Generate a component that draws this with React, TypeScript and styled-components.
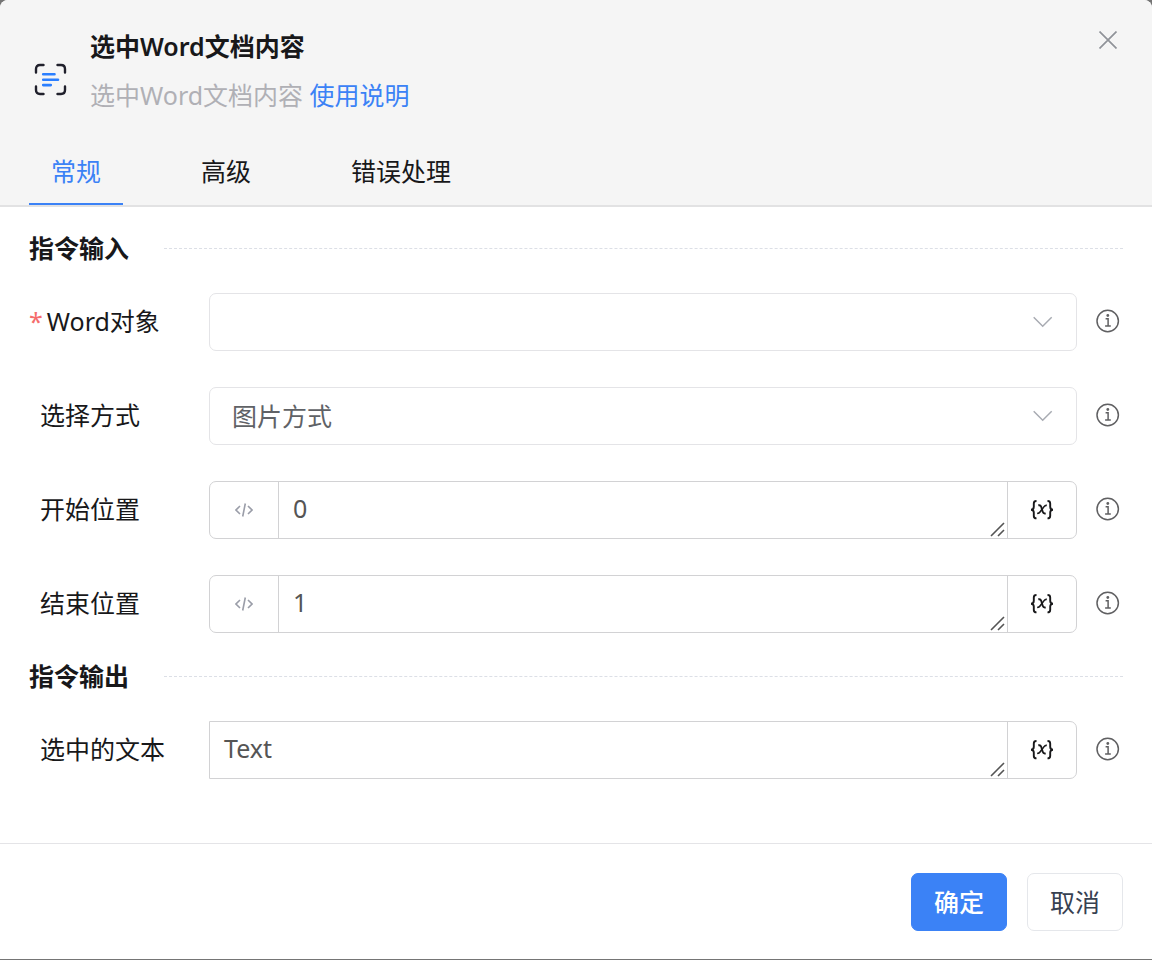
import React, { useState } from 'react';
import styled, { createGlobalStyle } from 'styled-components';

const GlobalStyle = createGlobalStyle`
  *, *::before, *::after { box-sizing: border-box; }
  body {
    margin: 0;
    background: #757575;
    font-family: 'Noto Sans', 'Noto Sans CJK SC', sans-serif;
    font-size: 25px;
    line-height: 36px;
    color: #18181a;
  }
  button, input, select, textarea { font: inherit; color: inherit; margin: 0; }
`;

const Dialog = styled.main`
  display: flex;
  flex-direction: column;
  min-height: calc(100vh - 1px);
  margin-bottom: 1px;
  background: #fff;
  border-radius: 8px 8px 0 0;
  overflow: hidden;
`;

const Header = styled.header`
  background: #f5f5f5;
  border-bottom: 2px solid #e2e2e3;
`;

const TitleBar = styled.div`
  display: flex;
  align-items: flex-start;
  padding: 28px 30px 0 34px;
`;

const TitleIcon = styled.svg`
  flex: none;
  margin: 35px 23px 0 0;
`;

const TitleText = styled.div`
  flex: 1;
  display: grid;
  gap: 13px;
`;

const Title = styled.h1`
  margin: 0;
  font-size: 25px;
  font-weight: 600;
`;

const Description = styled.p`
  margin: 0;
  color: #b0b0b5;
`;

const HelpLink = styled.a`
  color: #3b82f6;
  text-decoration: none;
`;

const IconButton = styled.button`
  display: grid;
  place-items: center;
  width: 28px;
  height: 24px;
  padding: 0;
  border: 0;
  background: none;
  cursor: pointer;
`;

const TabList = styled.div`
  display: flex;
  gap: 56px;
  padding: 25px 29px 0;
`;

const Tab = styled.button<{ $active: boolean }>`
  height: 67px;
  padding: 0 22px;
  border: 0;
  border-bottom: 2px solid ${(p) => (p.$active ? '#3b82f6' : 'transparent')};
  background: none;
  color: ${(p) => (p.$active ? '#3b82f6' : '#18181a')};
  cursor: pointer;
`;

const Content = styled.div`
  flex: 1;
  padding: 20px 29px 64px;
`;

const Section = styled.section`
  & + & { margin-top: 22px; }
`;

const SectionHead = styled.div`
  display: flex;
  align-items: center;
  gap: 35px;
  height: 42px;
  margin-bottom: 24px;

  &::after {
    content: '';
    flex: 1;
    border-top: 1px dashed #dcdfe6;
  }
`;

const SectionTitle = styled.h2`
  margin: 0;
  font-size: 25px;
  font-weight: 700;
`;

const Rows = styled.div`
  display: grid;
  gap: 36px;
`;

const Row = styled.div`
  display: grid;
  grid-template-columns: 180px 1fr 46px;
  align-items: center;
`;

const Label = styled.label<{ $required?: boolean }>`
  padding: 0 0 2px ${(p) => (p.$required ? 0 : 11)}px;
`;

const Required = styled.span`
  color: #f56c6c;
  margin-right: 4px;
`;

const InfoButton = styled(IconButton)`
  width: 30px;
  height: 26px;
  padding-bottom: 2px;
  justify-self: end;
`;

const SelectBox = styled.div`
  display: grid;
  align-items: center;

  & > * { grid-area: 1 / 1; }
`;

const Select = styled.select`
  appearance: none;
  width: 100%;
  height: 58px;
  padding: 0 60px 0 22px;
  border: 1px solid #e4e4e7;
  border-radius: 7px;
  background: #fff;
  color: #606266;
`;

const Chevron = styled.svg`
  justify-self: end;
  margin-right: 24px;
  pointer-events: none;
`;

const InputGroup = styled.div<{ $square?: boolean }>`
  display: flex;
  height: 58px;
  border: 1px solid #d2d2d4;
  border-radius: ${(p) => (p.$square ? '0 7px 7px 0' : '7px')};
`;

const Addon = styled.button<{ $side: 'left' | 'right' }>`
  display: grid;
  place-items: center;
  width: 69px;
  padding: 0;
  border: 0;
  border-${(p) => (p.$side === 'left' ? 'right' : 'left')}: 1px solid #d2d2d4;
  background: none;
  cursor: pointer;
`;

const TextWrap = styled.div`
  position: relative;
  flex: 1;
  display: flex;
`;

const TextArea = styled.textarea`
  flex: 1;
  min-width: 0;
  height: 56px;
  padding: 8px 14px;
  border: 0;
  outline: 0;
  resize: none;
  overflow: hidden;
  background: none;
  color: #555;
`;

const Grip = styled.svg`
  position: absolute;
  right: 2px;
  bottom: 1px;
  pointer-events: none;
`;

const Footer = styled.footer`
  display: flex;
  justify-content: flex-end;
  gap: 20px;
  padding: 29px 29px 28px;
  border-top: 1px solid #e4e4e7;
`;

const Button = styled.button<{ $primary?: boolean }>`
  height: 58px;
  padding: 0 22px;
  border: 1px solid ${(p) => (p.$primary ? '#3b82f6' : '#e5e7eb')};
  border-radius: 7px;
  background: ${(p) => (p.$primary ? '#3b82f6' : '#fff')};
  color: ${(p) => (p.$primary ? '#fff' : '#374151')};
  font-weight: ${(p) => (p.$primary ? 500 : 400)};
  cursor: pointer;
`;

const Info = ({ name }: { name: string }) => (
  <InfoButton type="button" aria-label={`${name}说明`}>
    <svg width="24" height="24" viewBox="0 0 24 24" fill="none" stroke="#606062" strokeWidth="1.5">
      <circle cx="11.7" cy="12" r="10.7" />
      <path d="M9.600 9.800h2.500v7.200M9.100 17.100h5.700" />
      <circle cx="11.800" cy="6.500" r="1.400" fill="#606062" stroke="none" />
    </svg>
  </InfoButton>
);

interface SelectFieldProps {
  id: string;
  label: string;
  options: string[];
  required?: boolean;
}

const SelectField = ({ id, label, options, required }: SelectFieldProps) => (
  <Row>
    <Label htmlFor={id} $required={required}>
      {required && <Required>*</Required>}
      {label}
    </Label>
    <SelectBox>
      <Select id={id} required={required}>
        {options.map((o) => (
          <option key={o} value={o}>{o}</option>
        ))}
      </Select>
      <Chevron width="20" height="12" viewBox="0 0 20 12" fill="none" stroke="#a8abb2" strokeWidth="1.5">
        <path d="M.7 1.300l9 9 9-9" />
      </Chevron>
    </SelectBox>
    <Info name={label} />
  </Row>
);

interface TextFieldProps {
  id: string;
  label: string;
  value: string;
  code?: boolean;
}

const TextField = ({ id, label, value, code }: TextFieldProps) => (
  <Row>
    <Label htmlFor={id}>{label}</Label>
    <InputGroup $square={!code}>
      {code && (
        <Addon type="button" $side="left" aria-label="表达式">
          <svg width="18" height="14" viewBox="0 0 18 14" fill="none" stroke="#9a9da8" strokeWidth="1.6">
            <path d="M5 3L1 7l4 4M13 3l4 4-4 4M10.300.500l-2.600 13" />
          </svg>
        </Addon>
      )}
      <TextWrap>
        <TextArea id={id} rows={1} defaultValue={value} />
        <Grip width="15" height="15" viewBox="0 0 15 15" stroke="#555" strokeWidth="1.6">
          <path d="M1 14L14 1M8 14l6-6" />
        </Grip>
      </TextWrap>
      <Addon type="button" $side="right" aria-label="选择变量">
        <svg width="24" height="20" viewBox="0 0 24 20" fill="none" stroke="#18181a" strokeWidth="1.9">
          <path d="M6.500 1Q3.800 1 3.800 3.400v3.400Q3.800 9.700 1 9.700q2.800 0 2.800 2.900V16q0 2.400 2.700 2.400" />
          <path d="M17.500 1q2.700 0 2.700 2.400v3.400q0 2.900 2.800 2.900-2.800 0-2.800 2.900V16q0 2.400-2.700 2.400" />
          <path d="M8.300 5.300q2.200-.5 2.900 1.500l1.500 5q.7 2.200 3 1.600" />
          <path strokeWidth="1.600" d="M16.800 5.400q-1.600-.3-2.700 1.200L10 12q-1.100 1.600-2.800 1.300" />
        </svg>
      </Addon>
    </InputGroup>
    <Info name={label} />
  </Row>
);

const TABS = ['常规', '高级', '错误处理'];

export default function App() {
  const [active, setActive] = useState(TABS[0]);

  return (
    <>
      <GlobalStyle />
      <Dialog>
        <Header>
          <TitleBar>
            <TitleIcon width="33" height="33" viewBox="0 0 33 33" fill="none" strokeWidth="2.4" strokeLinecap="round">
              <path
                stroke="#20202c"
                d="M2 9.500V6q0-4 4-4h3.500M23.500 2H27q4 0 4 4v3.500M31 23.500V27q0 4-4 4h-3.500M9.500 31H6q-4 0-4-4v-3.500"
              />
              <path stroke="#2b7fff" strokeWidth="2.600" d="M9.200 11.200h11.300M9.200 16.700h14.800M9.200 22.100h7.600" />
            </TitleIcon>
            <TitleText>
              <Title>选中Word文档内容</Title>
              <Description>
                选中Word文档内容 <HelpLink href="#help">使用说明</HelpLink>
              </Description>
            </TitleText>
            <IconButton type="button" aria-label="关闭">
              <svg width="18" height="18" viewBox="0 0 18 18" stroke="#909399" strokeWidth="1.7">
                <path d="M.5.5l17 17M17.500.5l-17 17" />
              </svg>
            </IconButton>
          </TitleBar>
          <TabList role="tablist">
            {TABS.map((t) => (
              <Tab
                key={t}
                type="button"
                role="tab"
                aria-selected={t === active}
                $active={t === active}
                onClick={() => setActive(t)}
              >
                {t}
              </Tab>
            ))}
          </TabList>
        </Header>

        <Content>
          <Section>
            <SectionHead>
              <SectionTitle>指令输入</SectionTitle>
            </SectionHead>
            <Rows>
              <SelectField id="word-object" label="Word对象" options={['']} required />
              <SelectField id="select-mode" label="选择方式" options={['图片方式']} />
              <TextField id="start" label="开始位置" value="0" code />
              <TextField id="end" label="结束位置" value="1" code />
            </Rows>
          </Section>
          <Section>
            <SectionHead>
              <SectionTitle>指令输出</SectionTitle>
            </SectionHead>
            <Rows>
              <TextField id="selected-text" label="选中的文本" value="Text" />
            </Rows>
          </Section>
        </Content>

        <Footer>
          <Button type="button" $primary>确定</Button>
          <Button type="button">取消</Button>
        </Footer>
      </Dialog>
    </>
  );
}
